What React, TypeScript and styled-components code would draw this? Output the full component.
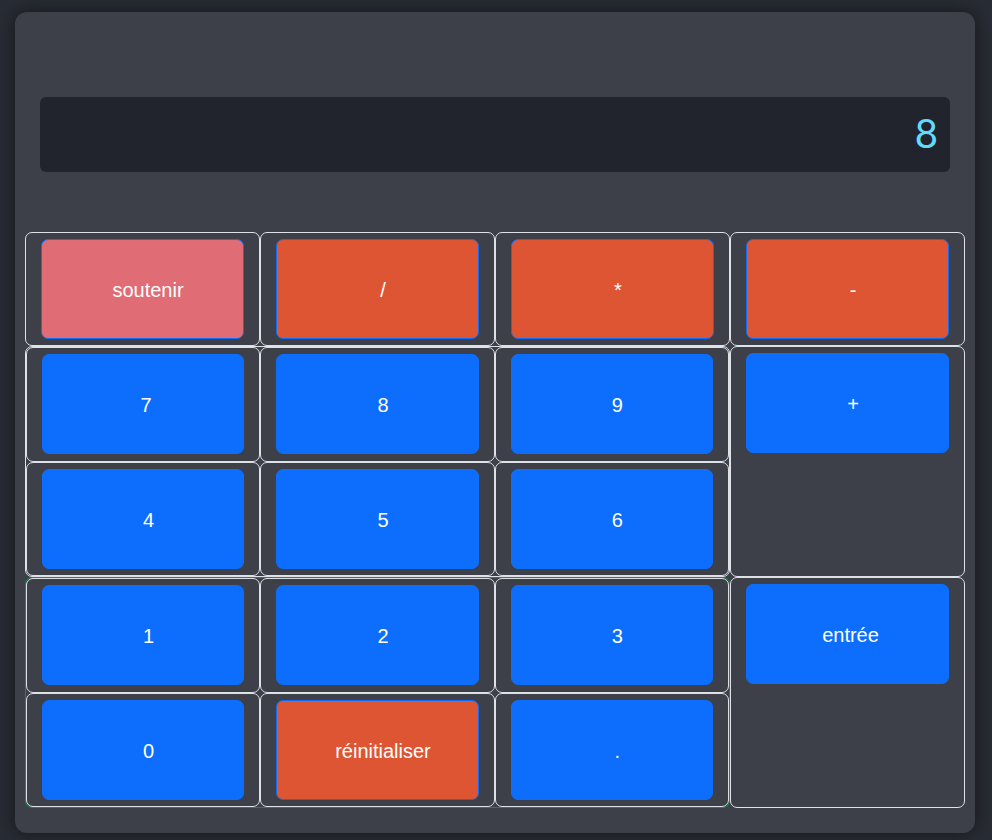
import React, { useState } from "react";
import styled, { createGlobalStyle } from "styled-components";

const GlobalStyle = createGlobalStyle`
  *, *::before, *::after { box-sizing: border-box; }
  body {
    margin: 0;
    background: #282c34;
    font-family: "Liberation Sans", Arial, sans-serif;
  }
`;

const Page = styled.main`
  padding: 12px 17px 7px 15px;
`;

const Calculator = styled.section`
  padding: 85px 10px 25px;
  background: #3d4048;
  border-radius: 12px;
  box-shadow: 0 0 20px rgba(0, 0, 0, 0.5);
`;

const Display = styled.output`
  display: flex;
  align-items: center;
  justify-content: flex-end;
  height: 75px;
  margin: 0 15px 60px;
  padding: 0 12px 4px;
  border-radius: 6px;
  background: #21242c;
  color: #61dafb;
  font-family: Lato, "Open Sans", sans-serif;
  font-size: 40px;
  line-height: 60px;
`;

const Row = styled.div`
  display: grid;
  grid-template-columns: repeat(4, minmax(0, 1fr));
`;

const Group = styled.div<{ $edge: string }>`
  display: grid;
  grid-column: span 3;
  grid-template-columns: repeat(3, minmax(0, 1fr));
  grid-template-rows: 115px 114px;
  border: 1px solid ${(p) => p.$edge};
  border-radius: 7px;
`;

const Cell = styled.div`
  padding: 6px 15px;
  border: 1px solid #dee2e6;
  border-radius: 7px;
`;

const fills = { digit: "#0d6efd", operator: "#de5533", undo: "#e06c75" };
type Tone = keyof typeof fills;

const Key = styled.button<{ $tone: Tone; $inset: number }>`
  display: block;
  width: 100%;
  height: 100px;
  padding: 1px 0 0 ${(p) => p.$inset}px;
  border: 1px solid #0d6efd;
  border-radius: 7px;
  background: ${(p) => fills[p.$tone]};
  color: #fff;
  font-family: inherit;
  font-size: 20px;
  line-height: 30px;
  text-align: center;
  cursor: pointer;
`;

type KeySpec = { label: string; tone?: Tone; inset?: number };

const topKeys: KeySpec[] = [
  { label: "soutenir", tone: "undo" },
  { label: "/", tone: "operator" },
  { label: "*", tone: "operator" },
  { label: "-", tone: "operator" },
];

const groups: { edge: string; keys: KeySpec[]; side: KeySpec }[] = [
  {
    edge: "#dee2e6",
    keys: [
      { label: "7", inset: 6 },
      { label: "8" },
      { label: "9" },
      { label: "4" },
      { label: "5" },
      { label: "6" },
    ],
    side: { label: "+" },
  },
  {
    edge: "#198754",
    keys: [
      { label: "1" },
      { label: "2" },
      { label: "3" },
      { label: "0" },
      { label: "réinitialiser", tone: "operator" },
      { label: "." },
    ],
    side: { label: "entrée", inset: 6 },
  },
];

function evaluate(expression: string): string {
  const tokens = expression.match(/\d*\.?\d+|[-+*/]/g) ?? [];
  const terms: number[] = [];
  let operator = "+";
  for (const token of tokens) {
    if (/^[-+*/]$/.test(token)) {
      operator = token;
      continue;
    }
    const value = Number(token);
    if (operator === "+") terms.push(value);
    else if (operator === "-") terms.push(-value);
    else if (operator === "*") terms.push((terms.pop() ?? 0) * value);
    else terms.push((terms.pop() ?? 0) / value);
  }
  return String(terms.reduce((sum, term) => sum + term, 0));
}

export default function App() {
  const [entry, setEntry] = useState("8");

  const press = (label: string) =>
    setEntry((current) => {
      if (label === "réinitialiser") return "";
      if (label === "soutenir") return current.slice(0, -1);
      if (label === "entrée") return evaluate(current);
      return current + label;
    });

  const renderKey = ({ label, tone = "digit", inset = 11 }: KeySpec) => (
    <Cell key={label}>
      <Key type="button" $tone={tone} $inset={inset} onClick={() => press(label)}>
        {label}
      </Key>
    </Cell>
  );

  return (
    <>
      <GlobalStyle />
      <Page>
        <Calculator>
          <Display aria-label="Résultat">{entry}</Display>
          <Row>{topKeys.map(renderKey)}</Row>
          {groups.map((group) => (
            <Row key={group.edge}>
              <Group $edge={group.edge}>{group.keys.map(renderKey)}</Group>
              {renderKey(group.side)}
            </Row>
          ))}
        </Calculator>
      </Page>
    </>
  );
}
